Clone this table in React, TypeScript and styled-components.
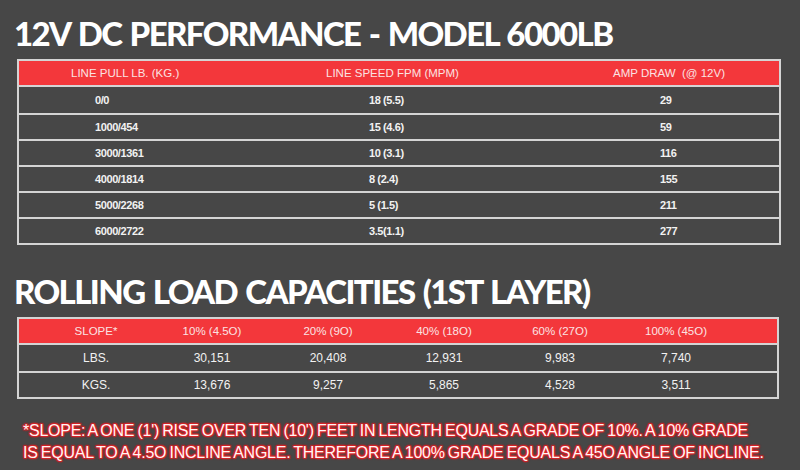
import React from "react";
import styled, { createGlobalStyle } from "styled-components";

const Global = createGlobalStyle`
  html, body { margin: 0; padding: 0; background: #474747; }
  body { width: 800px; height: 470px; overflow: hidden; }
`;

const Page = styled.div`
  width: 800px;
  height: 470px;
  box-sizing: border-box;
  padding: 14px 0 0 17px;
  background: #474747;
  font-family: "Liberation Sans", Arial, sans-serif;
  display: flex;
  flex-direction: column;
`;

const Title = styled.h1<{ $top: number }>`
  margin: ${(p) => p.$top}px 0 0 -3px;
  font-family: "Lato", "DejaVu Sans", sans-serif;
  font-weight: 900;
  font-size: 33px;
  line-height: 38px;
  color: #ffffff;
  letter-spacing: -1.6px;
  word-spacing: 2px;
  white-space: nowrap;
`;

const Table = styled.div<{ $cols: string; $top: number; $width: number }>`
  margin-top: ${(p) => p.$top}px;
  width: ${(p) => p.$width}px;
  box-sizing: border-box;
  border: 2px solid #d4d4d4;
  display: grid;
  grid-template-columns: ${(p) => p.$cols};
`;

const HeadCell = styled.div<{ $pad?: number; $center?: boolean }>`
  background: #f3373b;
  height: 24px;
  display: flex;
  align-items: center;
  justify-content: ${(p) => (p.$center ? "center" : "flex-start")};
  padding-left: ${(p) => p.$pad ?? 0}px;
  font-size: 11.5px;
  color: #fbe3e3;
  white-space: nowrap;
  border-bottom: 2px solid #d4d4d4;
`;

const Cell = styled.div<{ $pad?: number; $center?: boolean; $bold?: boolean; $first?: boolean }>`
  height: ${(p) => (p.$first ? 26 : 24)}px;
  display: flex;
  align-items: center;
  justify-content: ${(p) => (p.$center ? "center" : "flex-start")};
  padding-left: ${(p) => p.$pad ?? 0}px;
  font-size: ${(p) => (p.$bold ? 11 : 12)}px;
  font-weight: ${(p) => (p.$bold ? 700 : 400)};
  letter-spacing: ${(p) => (p.$bold ? "-0.4px" : "0")};
  color: #f2f2f2;
  white-space: nowrap;
  border-top: ${(p) => (p.$first ? "none" : "2px solid #d4d4d4")};
`;

const Note = styled.p`
  margin: 21px 0 0 6px;
  font-size: 16px;
  line-height: 22px;
  color: #fff4f4;
  letter-spacing: -0.25px;
  word-spacing: -1px;
  text-shadow: 0 0 2px #e0262a, 0 0 2px #e0262a, 0 0 3px #d82a2e, 1px 1px 1px #c92025, -1px -1px 1px #c92025,
    1px -1px 1px #c92025, -1px 1px 1px #c92025;
  white-space: nowrap;
`;

const perfCols = [
  { head: 52, data: 76 },
  { head: 34, data: 77 },
  { head: 21, data: 68 },
];

const perfRows = [
  ["0/0", "18 (5.5)", "29"],
  ["1000/454", "15 (4.6)", "59"],
  ["3000/1361", "10 (3.1)", "116"],
  ["4000/1814", "8 (2.4)", "155"],
  ["5000/2268", "5 (1.5)", "211"],
  ["6000/2722", "3.5(1.1)", "277"],
];

const loadHead = ["SLOPE*", "10% (4.5O)", "20% (9O)", "40% (18O)", "60% (27O)", "100% (45O)"];
const loadRows = [
  ["LBS.", "30,151", "20,408", "12,931", "9,983", "7,740"],
  ["KGS.", "13,676", "9,257", "5,865", "4,528", "3,511"],
];

export default function App() {
  return (
    <>
      <Global />
      <Page>
        <Title $top={0}>12V DC PERFORMANCE - MODEL 6000LB</Title>
        <Table $top={7} $width={764} $cols="273px 300px 1fr">
          <HeadCell $pad={perfCols[0].head}>LINE PULL LB. (KG.)</HeadCell>
          <HeadCell $pad={perfCols[1].head}>LINE SPEED FPM (MPM)</HeadCell>
          <HeadCell $pad={perfCols[2].head}>AMP DRAW&nbsp;&nbsp;(@ 12V)</HeadCell>
          {perfRows.map((r, i) =>
            r.map((v, j) => (
              <Cell key={`${i}-${j}`} $bold $first={i === 0} $pad={perfCols[j].data}>
                {v}
              </Cell>
            ))
          )}
        </Table>
        <Title $top={27}>ROLLING LOAD CAPACITIES (1ST LAYER)</Title>
        <Table $top={7} $width={762} $cols="19px repeat(6, 116px) 1fr">
          <HeadCell />
          {loadHead.map((h) => (
            <HeadCell key={h} $center>
              {h}
            </HeadCell>
          ))}
          <HeadCell />
          {loadRows.map((r, i) => (
            <React.Fragment key={i}>
              <Cell $first={i === 0} />
              {r.map((v, j) => (
                <Cell key={j} $center $first={i === 0}>
                  {v}
                </Cell>
              ))}
              <Cell $first={i === 0} />
            </React.Fragment>
          ))}
        </Table>
        <Note>
          *SLOPE: A ONE (1') RISE OVER TEN (10') FEET IN LENGTH EQUALS A GRADE OF 10%. A 10% GRADE
          <br />
          IS EQUAL TO A 4.5O INCLINE ANGLE. THEREFORE A 100% GRADE EQUALS A 45O ANGLE OF INCLINE.
        </Note>
      </Page>
    </>
  );
}
